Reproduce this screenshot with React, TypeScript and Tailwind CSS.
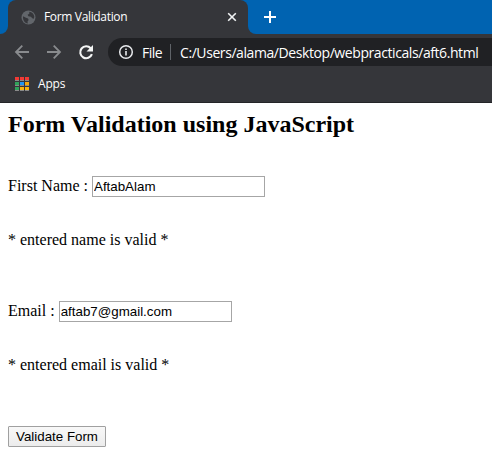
import type { ReactNode } from "react";

const APP_COLORS = [
  "#f23a35", "#f23a35", "#f23a35",
  "#2fa35a", "#2196f3", "#f5a70a",
  "#2fa35a", "#fbb30a", "#fbb30a",
];

function GlobeIcon() {
  return (
    <svg className="h-[15px] w-[15px] shrink-0" viewBox="0 0 15 15">
      <circle cx="7.500" cy="7.500" r="7" fill="#62666b" />
      <path d="M2 6.200L5.500 8c1.500.2 2.200 1 2 2.300L6.500 11.500l.3 2C3.700 13 1.800 10.500 2 6.200z" fill="#35363a" />
      <path d="M8.300 1.800c2.700.3 4.600 2.200 5 4.700l-.4 2.200-1.700-.4-1.200-1.500-2.600-.5-.8-1.600 1.700-1z" fill="#35363a" />
    </svg>
  );
}

function ArrowIcon({ flip = false }: { flip?: boolean }) {
  return (
    <svg
      className={flip ? "h-4 w-4 shrink-0 -scale-x-100" : "h-4 w-4 shrink-0"}
      viewBox="0 0 16 16"
      fill="none"
      stroke="#898b8e"
      strokeWidth="1.8"
    >
      <path d="M15 8H2.500M8.300 1.700L2 8l6.300 6.300" />
    </svg>
  );
}

function ReloadIcon() {
  return (
    <svg className="h-4 w-4 shrink-0" viewBox="0 0 16 16">
      <path d="M13.900 10.200A6 6 0 1 1 12.700 4.200" fill="none" stroke="#f4f5f5" strokeWidth="2.100" />
      <path d="M15 1v6.500H8.500z" fill="#f4f5f5" />
    </svg>
  );
}

function InfoIcon() {
  return (
    <svg className="h-4 w-4 shrink-0" viewBox="0 0 16 16">
      <circle cx="8" cy="8" r="6.300" fill="none" stroke="#e8eaed" strokeWidth="1.500" />
      <path d="M8 7v4.500M8 4.500V6" stroke="#e8eaed" strokeWidth="1.600" />
    </svg>
  );
}

function TabStrip() {
  return (
    <div className="flex h-[34px] bg-[#0063b1]">
      <div className="flex w-2 items-end bg-[#35363a]">
        <div className="h-full w-full rounded-br-lg bg-[#0063b1]" />
      </div>
      <div className="flex w-[240px] items-center rounded-t-lg bg-[#35363a] pr-[10px] pl-[13px]">
        <GlobeIcon />
        <span className="ml-2 flex-1 text-[12px] leading-4 tracking-[-0.34px] whitespace-nowrap text-white">Form Validation</span>
        <svg className="h-3 w-3" viewBox="0 0 12 12" stroke="#f1f3f4" strokeWidth="1.600">
          <path d="M2.200 2.200l7.600 7.600M9.800 2.200L2.200 9.800" />
        </svg>
      </div>
      <div className="w-2 bg-[#35363a]">
        <div className="h-full w-full rounded-bl-lg bg-[#0063b1]" />
      </div>
      <svg className="mt-[11px] ml-2 h-3 w-3" viewBox="0 0 12 12" stroke="#fff" strokeWidth="2">
        <path d="M6 0v12M0 6h12" />
      </svg>
    </div>
  );
}

function Toolbar() {
  return (
    <div className="flex h-9 items-center pl-[14px]">
      <ArrowIcon />
      <div className="ml-4 flex"><ArrowIcon flip /></div>
      <div className="ml-4 flex"><ReloadIcon /></div>
      <div className="ml-[14px] flex h-7 flex-1 items-center rounded-l-full bg-[#202124] pl-[10px] text-[14px] whitespace-nowrap text-white">
        <InfoIcon />
        <span className="ml-2 w-[28px] tracking-[-0.5px]">File</span>
        <span className="h-4 w-px bg-[#5f6368]" />
        <span className="ml-[9px] tracking-[-0.42px]">C:/Users/alama/Desktop/webpracticals/aft6.html</span>
      </div>
    </div>
  );
}

function BookmarksBar() {
  return (
    <div className="flex h-[33px] items-center border-b border-[#242528] pb-1 pl-[15px]">
      <div className="grid grid-cols-3 gap-px">
        {APP_COLORS.map((color, i) => (
          <span key={i} className="h-1 w-1 border-b border-[#8a8a8a]" style={{ backgroundColor: color }} />
        ))}
      </div>
      <span className="ml-[9px] text-[12px] leading-4 tracking-[-0.2px] text-white">Apps</span>
    </div>
  );
}

function Field({ label, value }: { label: string; value: string }) {
  return (
    <label className="flex h-[21px] items-start whitespace-pre">
      <span className="pt-px leading-[18px]">{label} : </span>
      <input
        className="h-[21px] w-[173px] border border-[#a6a6a6] bg-white px-px font-['Liberation_Sans',Arial,sans-serif] text-[13.333px] text-black outline-none"
        defaultValue={value}
      />
    </label>
  );
}

function Message({ children }: { children: ReactNode }) {
  return <p className="mt-[34px] h-[18px] leading-[18px]">{children}</p>;
}

export default function App() {
  return (
    <div className="h-[458px] w-[492px] overflow-hidden bg-white">
      <header className="bg-[#35363a] font-['Open_Sans','Noto_Sans',sans-serif]">
        <TabStrip />
        <Toolbar />
        <BookmarksBar />
      </header>
      <main className="px-2 pt-2 font-['Liberation_Serif','Times_New_Roman',serif] text-[16px] text-black">
        <h2 className="mb-[38px] h-[27px] text-[24px] leading-[27px] font-bold">Form Validation using JavaScript</h2>
        <Field label="First Name" value="AftabAlam" />
        <Message>* entered name is valid *</Message>
        <div className="mt-[52px]">
          <Field label="Email" value="aftab7@gmail.com" />
        </div>
        <Message>* entered email is valid *</Message>
        <button
          type="button"
          className="mt-[52px] flex h-[21px] w-[98px] items-center justify-center rounded-[1px] border border-[#a0a0a0] bg-linear-to-b from-[#f8f8f8] to-[#ececec] font-['Liberation_Sans',Arial,sans-serif] text-[13.333px] whitespace-nowrap"
        >
          Validate Form
        </button>
      </main>
    </div>
  );
}
